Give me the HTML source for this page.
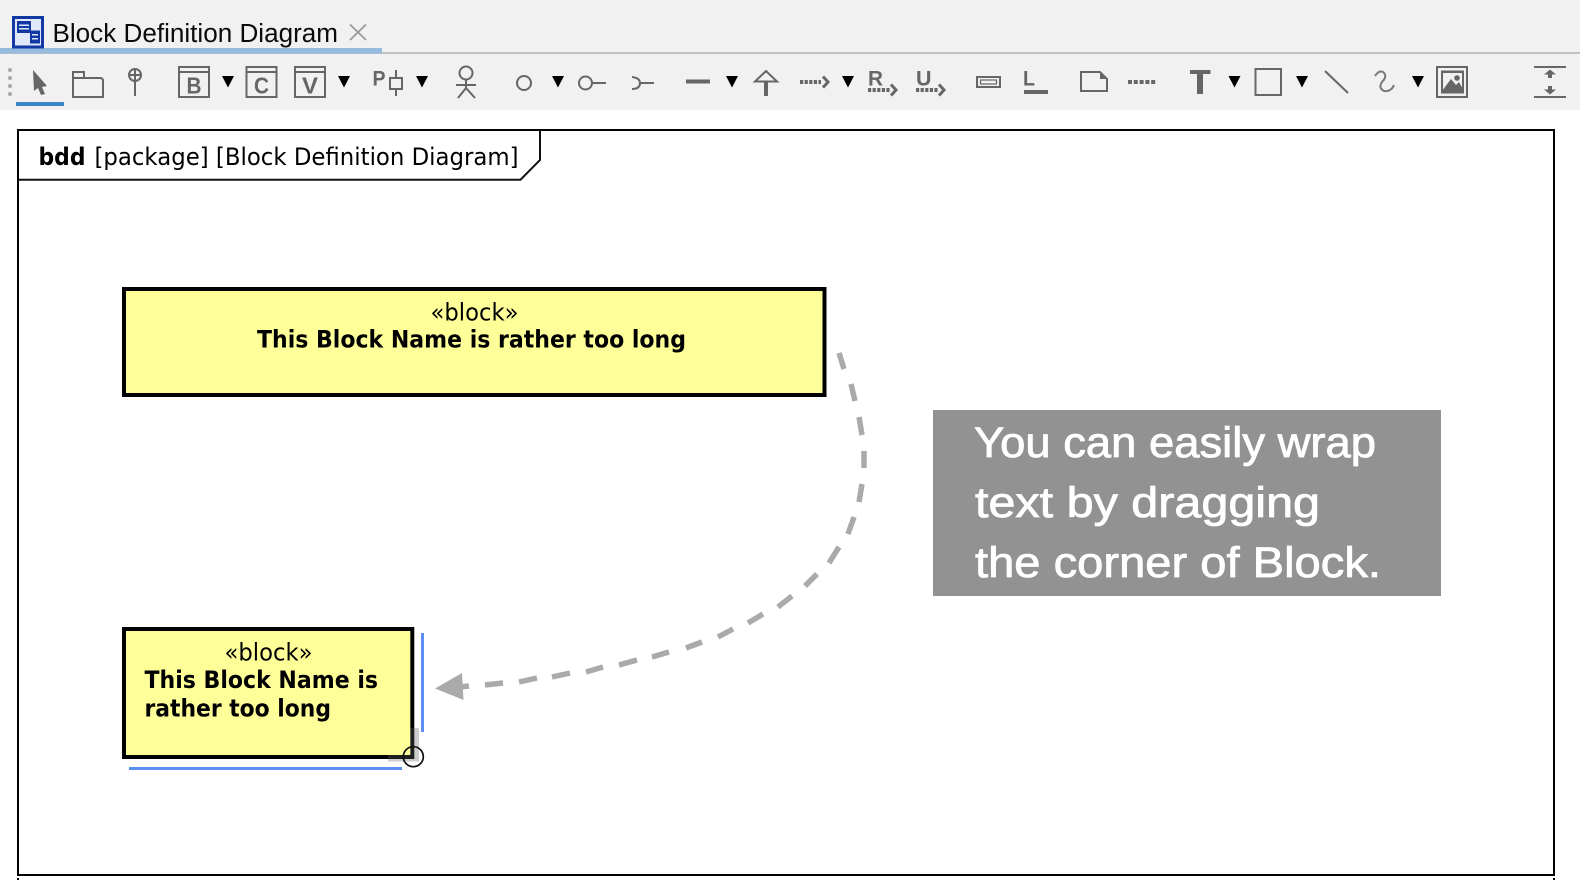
<!DOCTYPE html>
<html><head><meta charset="utf-8"><style>
html,body{margin:0;padding:0;background:#fff;width:1580px;height:880px;overflow:hidden}
svg{display:block}
.i{fill:none;stroke:#666;stroke-width:2}
.f{fill:#666}
.l{font-family:"Liberation Sans",sans-serif;font-weight:700;fill:#666}
.d{font-family:"DejaVu Sans",sans-serif;fill:#000}
.w{font-family:"Liberation Sans",sans-serif;fill:#fff;font-size:43px;stroke:#fff;stroke-width:.8}
</style></head><body>
<svg width="1580" height="880" viewBox="0 0 1580 880" xmlns="http://www.w3.org/2000/svg">
<rect width="1580" height="110" fill="#f1f1f1"/>
<rect y="52" width="1580" height="2" fill="#c2c2c2"/>
<rect y="48" width="382" height="5.500" fill="#97bbdf"/>
<!-- tab icon -->
<rect x="13.500" y="17.500" width="29" height="29.500" fill="#dfe9fa" stroke="#1238a3" stroke-width="3"/>
<rect x="17" y="21" width="14" height="12" fill="#1238a3"/><rect x="19" y="24.500" width="10" height="1.500" fill="#dfe9fa"/><rect x="19" y="28" width="10" height="1.500" fill="#dfe9fa"/>
<rect x="30" y="30.500" width="10" height="13" fill="#1238a3"/><rect x="32" y="34" width="6" height="1.500" fill="#dfe9fa"/><rect x="32" y="38" width="6" height="1.500" fill="#dfe9fa"/>
<text x="52.500" y="42" font-family="Liberation Sans,sans-serif" font-size="25.500" fill="#0a0a0a" textLength="285.500" lengthAdjust="spacingAndGlyphs">Block Definition Diagram</text>
<path d="M350 24.500L366 40M366 24.500L350 40" stroke="#999" stroke-width="1.700" fill="none"/>
<!-- grip -->
<g fill="#aaa"><circle cx="10" cy="70" r="2"/><circle cx="10" cy="78" r="2"/><circle cx="10" cy="86" r="2"/><circle cx="10" cy="94" r="2"/></g>
<path class="f" d="M33 70L47 86L42 87L45 94L41 95L38 88L34 91Z"/>
<rect x="16" y="102" width="48" height="4" fill="#3d85c6"/>
<path class="i" d="M73 97V72H84V78H100Q103 78 103 81V97Z"/><path class="i" d="M73 78H84"/>
<circle class="i" cx="135" cy="75" r="6"/><path class="i" d="M135 69V96M129 75H141"/>
<g class="i"><rect x="179" y="67" width="30" height="30"/><path d="M179 72H209"/><rect x="246.500" y="67" width="30" height="30"/><path d="M246.500 72H276.500"/><rect x="295" y="67" width="30" height="30"/><path d="M295 72H325"/></g>
<text class="l" x="186.500" y="93.500" font-size="23" textLength="15" lengthAdjust="spacingAndGlyphs">B</text>
<text class="l" x="254" y="93.500" font-size="23" textLength="15" lengthAdjust="spacingAndGlyphs">C</text>
<text class="l" x="302" y="93.500" font-size="23" textLength="16" lengthAdjust="spacingAndGlyphs">V</text>
<g fill="#000"><path d="M222 76H234L228 87.500Z"/><path d="M338 76H350L344 87.500Z"/><path d="M416 76H428L422 87.500Z"/><path d="M552 76H564L558 87.500Z"/><path d="M726 76H738L732 87.500Z"/><path d="M842 76H854L848 87.500Z"/><path d="M1228.500 76H1240.500L1234.500 87.500Z"/><path d="M1296 76H1308L1302 87.500Z"/><path d="M1412 76H1424L1418 87.500Z"/></g>
<text class="l" x="372.500" y="85.500" font-size="21" textLength="13" lengthAdjust="spacingAndGlyphs">P</text>
<rect class="i" x="390" y="78" width="12" height="11"/><path class="i" d="M396 70V78M396 89V96"/>
<circle class="i" cx="466" cy="73" r="6.500"/><path class="i" d="M466 79.500V88M456 85H476M458 98L466 88L475 98"/>
<circle class="i" cx="524" cy="83" r="7"/>
<circle class="i" cx="585.500" cy="83" r="6.500"/><path class="i" d="M592 83H606"/>
<path class="i" d="M632 77Q640 78 640 83Q640 89 632 89M640 83H654"/>
<rect class="f" x="686" y="79.500" width="24" height="4"/>
<path class="i" d="M755 81.500L766 71L777 81.500H755Z"/><rect class="f" x="764" y="82" width="4" height="14"/>
<g class="i" style="stroke-width:4"><path d="M800 82H821" stroke-dasharray="3.200 1.400"/><path style="stroke-width:3" d="M823 76.500L828 82L823 87.500"/>
<path d="M868 90H890" stroke-dasharray="3.200 1.400"/><path style="stroke-width:3" d="M891 84.500L896 90L891 95.500"/>
<path d="M916 90H938" stroke-dasharray="3.200 1.400"/><path style="stroke-width:3" d="M939 84.500L944 90L939 95.500"/>
<path d="M1128 82H1156" stroke-dasharray="4 1.800"/></g>
<text class="l" x="868" y="85.500" font-size="21" textLength="15" lengthAdjust="spacingAndGlyphs">R</text>
<text class="l" x="916" y="85.500" font-size="21" textLength="15.500" lengthAdjust="spacingAndGlyphs">U</text>
<rect class="i" x="977" y="77" width="23" height="10"/><rect x="980.500" y="80" width="16" height="4" fill="#f1f1f1" stroke="#666" stroke-width="1.200"/>
<text class="l" x="1023" y="85.500" font-size="21" textLength="12" lengthAdjust="spacingAndGlyphs">L</text>
<rect class="f" x="1024" y="90" width="24" height="4"/>
<path class="i" d="M1081 72H1100L1107 79V91H1081Z"/><path class="f" d="M1100 71L1108 79H1100Z"/>
<path class="f" d="M1190 70H1210.500V74H1203V94H1197V74H1190Z"/>
<rect class="i" x="1255.500" y="69" width="25.500" height="26"/>
<path class="i" d="M1325 71L1348 93"/>
<path class="i" style="stroke:#777" d="M1375 76Q1379 70 1383 72Q1388 76 1382 82Q1378 88 1384 91Q1391 92 1394 85"/>
<rect class="i" x="1437" y="67" width="30" height="30"/>
<rect x="1441" y="70.500" width="23" height="23" fill="#666"/><rect x="1443" y="73" width="19" height="17" fill="#f1f1f1"/>
<path class="f" d="M1442 91L1451 79L1456 85L1459 82L1464 91Z"/><circle class="f" cx="1457" cy="78" r="2.800"/>
<path class="i" d="M1534 67H1566M1534 97H1566"/>
<path class="f" d="M1544 74.500L1550 69.500L1556 74.500H1552V78H1548V74.500Z"/>
<path class="f" d="M1544 89.500L1550 94.500L1556 89.500H1552V86H1548V89.500Z"/>

<!-- frame -->
<rect x="18" y="130" width="1536" height="745" fill="#fff" stroke="#000" stroke-width="2"/>
<path d="M18 179.700H520.500L540 160V130" fill="none" stroke="#111" stroke-width="2"/>
<rect x="1553" y="878" width="2" height="2" fill="#000"/><rect x="17" y="878" width="2" height="2" fill="#000"/>
<text class="d" x="38.500" y="165" font-size="24" font-weight="700" textLength="47" lengthAdjust="spacingAndGlyphs">bdd</text>
<text class="d" x="94.500" y="165" font-size="24" textLength="424" lengthAdjust="spacingAndGlyphs">[package] [Block Definition Diagram]</text>

<!-- big block -->
<rect x="124" y="289" width="700.500" height="106" fill="#ffff99" stroke="#000" stroke-width="4"/>
<text class="d" x="430.500" y="320.500" font-size="24" textLength="88" lengthAdjust="spacingAndGlyphs">«block»</text>
<text class="d" x="257" y="347.500" font-size="24" font-weight="700" textLength="429" lengthAdjust="spacingAndGlyphs">This Block Name is rather too long</text>

<!-- small block -->
<rect x="411" y="728" width="8" height="33" fill="#ccc"/><rect x="388" y="755" width="31" height="6.500" fill="#ccc"/>
<path d="M412.300 728V629H124V757H388" fill="#ffff99" stroke="#000" stroke-width="4"/>
<rect x="388" y="728" width="22.300" height="27" fill="#ffff99"/>
<path d="M412.300 728V757H388" fill="none" stroke="#000" stroke-width="4" opacity=".85"/>
<circle cx="413.300" cy="756.700" r="10" fill="none" stroke="#111" stroke-width="1.700"/>
<text class="d" x="224.500" y="660.500" font-size="24" textLength="88" lengthAdjust="spacingAndGlyphs">«block»</text>
<text class="d" x="144.500" y="688" font-size="24" font-weight="700" textLength="233.500" lengthAdjust="spacingAndGlyphs">This Block Name is</text>
<text class="d" x="144.500" y="716.500" font-size="24" font-weight="700" textLength="186.500" lengthAdjust="spacingAndGlyphs">rather too long</text>
<rect x="421" y="633" width="3" height="99" fill="#5b8ef0"/>
<rect x="129" y="767" width="273" height="3" fill="#5b8ef0"/>

<!-- dashes -->
<path fill="none" stroke="#aaa" stroke-width="5.500" d="M839 353L844 369M851 384L855 401M859 417L862 435M864 451V468M862 484L859 502M854 517L848 534M839 547L829 563M817 574L805 586M792 596L778 607M763 614L748 623M733 629L718 637M702 642L686 648M669 652L652 657M637 660L619 665M603 667L586 672M570 673L552 677M537 678L519 682M503 683L485 685M469 686L460 687"/>
<path fill="#aaa" d="M435 688.500L462 673L463.500 700Z"/>

<!-- callout -->
<rect x="933" y="410" width="508" height="186" fill="#929292"/>
<text class="w" x="974" y="457" textLength="402" lengthAdjust="spacingAndGlyphs">You can easily wrap</text>
<text class="w" x="975" y="517" textLength="345" lengthAdjust="spacingAndGlyphs">text by dragging</text>
<text class="w" x="975" y="577" textLength="406" lengthAdjust="spacingAndGlyphs">the corner of Block.</text>
</svg>
</body></html>
